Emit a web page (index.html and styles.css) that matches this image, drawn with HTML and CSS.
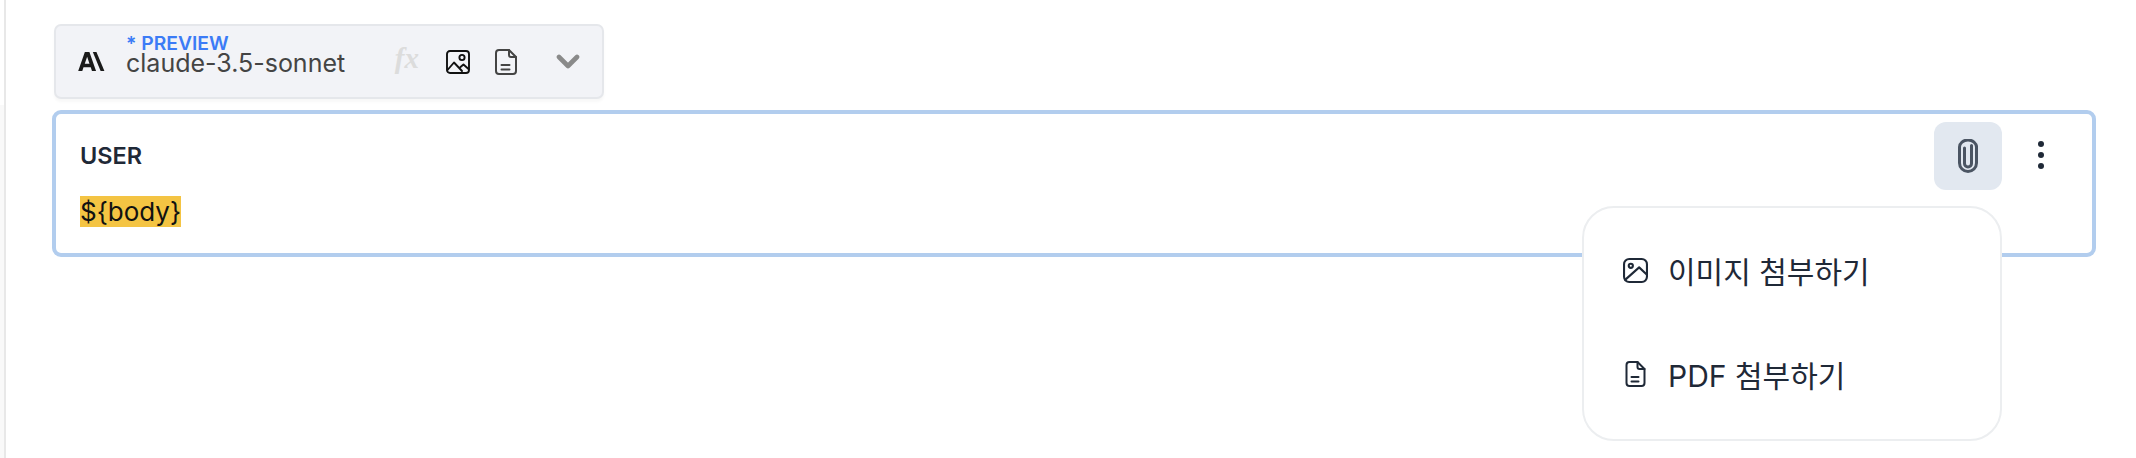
FILE: index.html
```html
<!DOCTYPE html>
<html lang="ko">
<head>
<meta charset="utf-8">
<title>Prompt</title>
<link rel="stylesheet" href="styles.css">
</head>
<body>
<div class="page">
  <div class="model">
    <svg class="logo" viewBox="0 0 28 20" width="27" height="19"><path fill="#1a1a1a" d="M0 20 7 0h4.8L18.8 20h-4.3l-1.3-4H5.6l-1.3 4zM6.9 12.4h5L9.4 5z"/><path fill="#1a1a1a" d="M15.4 0h3.8L27.6 20h-4z"/></svg>
    <div class="model-name">
      <span class="preview">* PREVIEW</span>
      <span class="name">claude-3.5-sonnet</span>
    </div>
    <div class="caps">
      <span class="fx">fx</span>
      <svg class="cap-image" viewBox="0 0 24 24" width="24" height="24" fill="none" stroke="#111" stroke-width="1.9" stroke-linejoin="round" stroke-linecap="round"><rect x="1" y="1" width="22" height="22" rx="3"/><circle cx="16" cy="7.5" r="2.6"/><path d="M1.5 20 8 12.5l8 8.5M14.5 17l3-2.5 5 4.5"/></svg>
      <svg class="cap-doc" viewBox="0 0 22 26" width="22" height="26" fill="none" stroke="#444" stroke-width="2" stroke-linejoin="round" stroke-linecap="round"><path d="M4 1h10l7 7v14a3 3 0 0 1-3 3H4a3 3 0 0 1-3-3V4a3 3 0 0 1 3-3z"/><path d="M14 1v5a2 2 0 0 0 2 2h5"/><path d="M6.5 16h8M6.5 20.500h8"/></svg>
      <svg class="chev" viewBox="0 0 24 16" width="24" height="16" fill="none" stroke="#8a8a8a" stroke-width="4.6" stroke-linecap="round" stroke-linejoin="round"><path d="M3 3l9 9 9-9"/></svg>
    </div>
  </div>
  <div class="message">
    <div class="message-body">
      <div class="role">USER</div>
      <div class="content"><mark class="var">${body}</mark></div>
    </div>
    <div class="actions">
      <button class="attach" type="button">
        <svg viewBox="0 0 20 34" width="20" height="34" fill="none" stroke="#4b5563" stroke-width="3" stroke-linecap="round"><path d="M6.500 9v15.500a3.500 3.500 0 0 0 7 0V6.500"/><path d="M1.500 9v15a8.500 8.500 0 0 0 17 0V7.500"/><path d="M1.500 9V8a8.500 7 0 0 1 17 0"/></svg>
      </button>
      <button class="more" type="button">
        <svg viewBox="0 0 6 30" width="6" height="30" fill="#1f2937"><circle cx="3" cy="3" r="3"/><circle cx="3" cy="14" r="3"/><circle cx="3" cy="25" r="3"/></svg>
      </button>
    </div>
    <div class="menu">
      <div class="menu-item">
        <svg viewBox="0 0 24 24" width="25" height="25" fill="none" stroke="#1f2937" stroke-width="2" stroke-linecap="round" stroke-linejoin="round"><rect x="1" y="1" width="22" height="22" rx="5"/><circle cx="7.500" cy="7.500" r="2"/><path d="M2 21 15.500 9l7 6.500"/></svg>
        <span>이미지 첨부하기</span>
      </div>
      <div class="menu-item">
        <svg viewBox="0 0 24 26" width="25" height="26" fill="none" stroke="#1f2937" stroke-width="2" stroke-linecap="round" stroke-linejoin="round"><path d="M6 1h8l7 7v14a3 3 0 0 1-3 3H6a3 3 0 0 1-3-3V4a3 3 0 0 1 3-3z"/><path d="M14 1v5a2 2 0 0 0 2 2h5"/><path d="M8 16h7M8 20.500h7"/></svg>
        <span>PDF 첨부하기</span>
      </div>
    </div>
  </div>
</div>
</body>
</html>
```

FILE: styles.css
```css
* { box-sizing: border-box; }
html, body { margin: 0; padding: 0; height: 100%; background: #fff; }
body {
  font-family: Inter, "Noto Sans CJK KR", sans-serif;
  overflow: hidden;
  padding-left: 4px;
  background: linear-gradient(#fff 105px, #f9f9f9 105px);
}
.page {
  height: 458px;
  background: #fff;
  border-left: 2px solid #e8e8e8;
  padding: 24px 40px 0 48px;
}
.model {
  width: 550px;
  height: 75px;
  display: flex;
  align-items: center;
  padding: 0 22px 0 22px;
  background: #f2f3f7;
  border: 2px solid #e5e7eb;
  border-radius: 7px;
  box-shadow: 0 3px 3px rgba(0,0,0,.03);
}
.logo { flex: none; }
.model-name { display: flex; flex-direction: column; margin-left: 21px; margin-top: -11px; }
.preview { font-size: 19.3px; line-height: 15px; font-weight: 600; color: #3b7bf6; }
.name { font-size: 25px; line-height: 25px; color: #444; }
.caps { display: flex; align-items: center; margin-left: auto; }
.fx { font-family: "Liberation Serif", serif; font-style: italic; font-weight: 700; font-size: 29px; color: #dcdcdc; margin-right: 27px; margin-top: -6px; }
.cap-image { margin-right: 25px; }
.cap-doc { margin-right: 39px; }
.message {
  position: relative;
  height: 147px;
  margin-top: 11px;
  margin-left: -2px;
  border: 4px solid #b2cdee;
  border-radius: 9px;
  display: flex;
  justify-content: space-between;
}
.message-body { padding: 29px 0 0 24px; }
.role { font-size: 23.5px; line-height: 26px; font-weight: 600; color: #1f2937; }
.content { margin-top: 26px; font-size: 26px; line-height: 34px; }
.var { background: #f4c443; color: #111; padding: 0; }
.actions { display: flex; padding: 8px 0 0 0; margin-right: 12px; }
.attach, .more { border: 0; padding: 0; background: none; display: flex; align-items: center; justify-content: center; height: 68px; }
.attach { width: 68px; background: #e2e8f0; border-radius: 12px; }
.more { width: 78px; }
.menu {
  position: absolute;
  right: 90px;
  top: 92px;
  width: 420px;
  height: 235px;
  padding: 10px 0 0 0;
  background: #fff;
  border: 2px solid #eceef0;
  border-radius: 32px;
}
.menu-item { display: flex; align-items: center; gap: 20px; height: 104px; padding: 0 0 0 39px; font-size: 30px; color: #1f2937; }
```
